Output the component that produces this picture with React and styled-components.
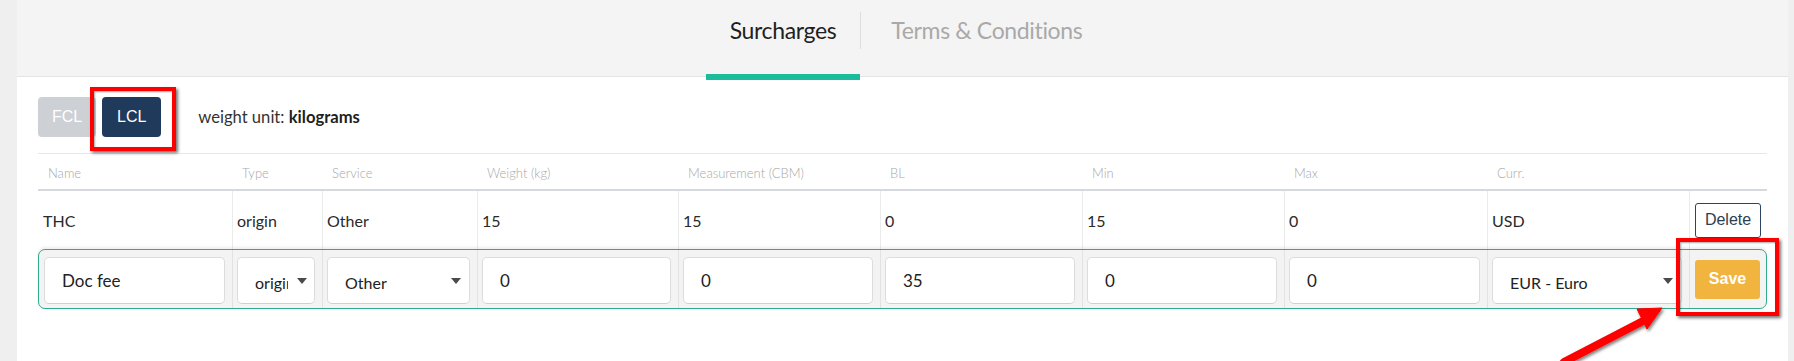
import React from "react";
import styled, { createGlobalStyle } from "styled-components";

const GlobalStyle = createGlobalStyle`
  html, body { margin: 0; padding: 0; }
  body {
    background: #efefef;
    font-family: Lato, "Noto Sans", sans-serif;
    color: #222;
  }
  *, *::before, *::after { box-sizing: border-box; }
`;

const COLS = "194px 90px 155px 201px 202px 202px 202px 203px 202px 78px";
const EDIT_COLS = "193px 90px 155px 201px 202px 202px 202px 203px 202px 77px";

const Page = styled.div`
  position: relative;
  width: 1794px;
  height: 361px;
  overflow: hidden;
  padding: 0 6px 0 17px;
`;

const Main = styled.main`
  background: #fff;
  height: 100%;
  display: flex;
  flex-direction: column;
`;

const TabBar = styled.nav`
  height: 77px;
  flex: none;
  padding-left: 6px;
  background: #f4f4f4;
  border-bottom: 1px solid #e4e4e4;
  display: flex;
  justify-content: center;
  align-items: flex-start;
`;

const Tab = styled.div`
  position: relative;
  z-index: 1;
  height: 80px;
  padding: 15px ${(p) => (p.$last ? "23px 0 30px" : "24px")};
  font-size: 23px;
  line-height: 30px;
  letter-spacing: -0.35px;
  color: ${(p) => (p.$active ? "#1f1f1f" : "#a9a9a9")};
  border-bottom: 6px solid ${(p) => (p.$active ? "#1abc9c" : "transparent")};
  cursor: pointer;
  white-space: nowrap;
`;

const TabDivider = styled.span`
  width: 1px;
  height: 37px;
  margin-top: 12px;
  background: #dedede;
`;

const Panel = styled.section`
  padding: 20px 21px 0;
`;

const Controls = styled.div`
  display: flex;
  align-items: center;
  height: 40px;
`;

const ModeGroup = styled.div`
  display: flex;
  gap: 6px;
`;

const ModeButton = styled.button`
  height: 40px;
  min-width: ${(p) => p.$w}px;
  padding: 0 14px;
  border: none;
  border-radius: 4px;
  font-family: "Liberation Sans", Arial, sans-serif;
  font-size: 16px;
  color: #fff;
  background: ${(p) => (p.$active ? "#1f3a5a" : "#cdd0d4")};
  cursor: pointer;
`;

const WeightUnit = styled.div`
  margin-left: 37px;
  font-size: 16.6px;
  color: #333;
  b { color: #1e1e1e; font-weight: 700; }
`;

const Rule = styled.hr`
  margin: 16px 0 0;
  border: none;
  border-top: 1px solid #e8e8e8;
`;

const Table = styled.div`
  display: flex;
  flex-direction: column;
`;

const HeaderRow = styled.div`
  display: grid;
  grid-template-columns: ${COLS};
  border-bottom: 2px solid #d5d9dd;
`;

const HeadCell = styled.div`
  padding: 11px 10px 8px;
  font-size: 13px;
  line-height: 16px;
  font-weight: 300;
  color: #a8a8a8;
  white-space: nowrap;
`;

const DataRow = styled.div`
  display: grid;
  grid-template-columns: ${COLS};
  height: 58px;
`;

const DataCell = styled.div`
  display: flex;
  align-items: center;
  padding: 0 4px 0 ${(p) => (p.$first ? "5px" : "4px")};
  border-left: ${(p) => (p.$first ? "none" : "1px solid #ebebeb")};
  font-size: 16px;
  color: #2a2a2a;
`;

const EditRow = styled.div`
  display: grid;
  grid-template-columns: ${EDIT_COLS};
  height: 60px;
  border: 1px solid #2eaa8c;
  border-radius: 7px;
  background: #f3f3f3;
  box-shadow: 0 -2px 3px rgba(0, 0, 0, 0.07);
`;

const EditCell = styled.div`
  padding: 7px 7px 4px ${(p) => (p.$first ? "5px" : "4px")};
  border-left: ${(p) => (p.$first ? "none" : "1px solid #e2e2e2")};
`;

const ActionCell = styled.div`
  display: flex;
  align-items: center;
  padding-left: 5px;
  border-left: 1px solid ${(p) => (p.$edit ? "#e2e2e2" : "#ebebeb")};
`;

const TextInput = styled.input`
  width: 100%;
  height: 47px;
  padding: 0 17px;
  border: 1px solid #dcdcdc;
  border-bottom-color: #d0d0d0;
  border-radius: 5px;
  background: #fff;
  font-family: Lato, "Noto Sans", sans-serif;
  font-size: 17px;
  color: #222;
  outline: none;
`;

const SelectWrap = styled.div`
  position: relative;
  height: 47px;
  &::after {
    content: "";
    position: absolute;
    right: ${(p) => p.$caretRight}px;
    top: 21px;
    border-left: 5px solid transparent;
    border-right: 5px solid transparent;
    border-top: 6px solid #4a4a4a;
    pointer-events: none;
  }
`;

const Select = styled.select`
  appearance: none;
  -webkit-appearance: none;
  width: 100%;
  height: 47px;
  padding: 3px 26px 0 17px;
  border: 1px solid #dcdcdc;
  border-bottom-color: #d0d0d0;
  border-radius: 5px;
  background: #fff;
  font-family: Lato, "Noto Sans", sans-serif;
  font-size: 16px;
  color: #222;
  outline: none;
`;

const DeleteButton = styled.button`
  width: 66px;
  height: 35px;
  padding: 0;
  border: 1px solid #2a4462;
  border-radius: 3px;
  background: #fff;
  font-family: "Liberation Sans", Arial, sans-serif;
  font-size: 16px;
  color: #2c3e50;
  cursor: pointer;
`;

const SaveButton = styled.button`
  width: 65px;
  height: 39px;
  padding: 0;
  border: none;
  border-radius: 3px;
  background: #f1b43f;
  font-family: "Liberation Sans", Arial, sans-serif;
  font-size: 16px;
  font-weight: 700;
  color: #fff;
  cursor: pointer;
`;

const Highlight = styled.div`
  position: absolute;
  left: ${(p) => p.$x}px;
  top: ${(p) => p.$y}px;
  width: ${(p) => p.$w}px;
  height: ${(p) => p.$h}px;
  border: 4px solid #f00;
  box-shadow: 2px 2px 3px rgba(0, 0, 0, 0.55), inset 1px 1px 2px rgba(0, 0, 0, 0.35);
  pointer-events: none;
`;

const ArrowLayer = styled.svg`
  position: absolute;
  left: 0;
  top: 0;
  pointer-events: none;
  overflow: visible;
`;

const headers = ["Name", "Type", "Service", "Weight (kg)", "Measurement (CBM)", "BL", "Min", "Max", "Curr.", ""];
const row = ["THC", "origin", "Other", "15", "15", "0", "15", "0", "USD"];

export default function App() {
  return (
    <>
      <GlobalStyle />
      <Page>
        <Main>
          <TabBar role="tablist">
            <Tab role="tab" $active>Surcharges</Tab>
            <TabDivider />
            <Tab role="tab" $last>Terms &amp; Conditions</Tab>
          </TabBar>
          <Panel>
            <Controls>
              <ModeGroup>
                <ModeButton $w={58}>FCL</ModeButton>
                <ModeButton $w={59} $active>LCL</ModeButton>
              </ModeGroup>
              <WeightUnit>
                weight unit: <b>kilograms</b>
              </WeightUnit>
            </Controls>
            <Rule />
            <Table role="table">
              <HeaderRow role="row">
                {headers.map((h, i) => (
                  <HeadCell role="columnheader" key={i}>{h}</HeadCell>
                ))}
              </HeaderRow>
              <DataRow role="row">
                {row.map((v, i) => (
                  <DataCell role="cell" key={i} $first={i === 0}>{v}</DataCell>
                ))}
                <ActionCell role="cell">
                  <DeleteButton>Delete</DeleteButton>
                </ActionCell>
              </DataRow>
              <EditRow role="row">
                <EditCell $first>
                  <TextInput defaultValue="Doc fee" />
                </EditCell>
                <EditCell>
                  <SelectWrap $caretRight={8}>
                    <Select defaultValue="origin">
                      <option value="origin">origin</option>
                      <option value="destination">destination</option>
                    </Select>
                  </SelectWrap>
                </EditCell>
                <EditCell>
                  <SelectWrap $caretRight={9}>
                    <Select defaultValue="Other">
                      <option>Other</option>
                      <option>Freight</option>
                    </Select>
                  </SelectWrap>
                </EditCell>
                <EditCell><TextInput defaultValue="0" /></EditCell>
                <EditCell><TextInput defaultValue="0" /></EditCell>
                <EditCell><TextInput defaultValue="35" /></EditCell>
                <EditCell><TextInput defaultValue="0" /></EditCell>
                <EditCell><TextInput defaultValue="0" /></EditCell>
                <EditCell>
                  <SelectWrap $caretRight={9}>
                    <Select defaultValue="EUR">
                      <option value="EUR">EUR - Euro</option>
                      <option value="USD">USD - US Dollar</option>
                    </Select>
                  </SelectWrap>
                </EditCell>
                <ActionCell $edit>
                  <SaveButton>Save</SaveButton>
                </ActionCell>
              </EditRow>
            </Table>
          </Panel>
        </Main>
        <Highlight $x={90} $y={87} $w={86} $h={64} />
        <Highlight $x={1676} $y={238} $w={103} $h={78} />
        <ArrowLayer width="1794" height="361" viewBox="0 0 1794 361">
          <defs>
            <filter id="arrowShadow" x="-20%" y="-20%" width="140%" height="140%">
              <feDropShadow dx="1.5" dy="2" stdDeviation="1.5" floodColor="#000" floodOpacity="0.5" />
            </filter>
          </defs>
          <g filter="url(#arrowShadow)" fill="#f00" stroke="#f00">
            <line x1="1564" y1="362" x2="1645" y2="320" strokeWidth="8" strokeLinecap="round" />
            <polygon points="1662,308 1637,309 1647,329" strokeWidth="1" strokeLinejoin="round" />
          </g>
        </ArrowLayer>
      </Page>
    </>
  );
}
